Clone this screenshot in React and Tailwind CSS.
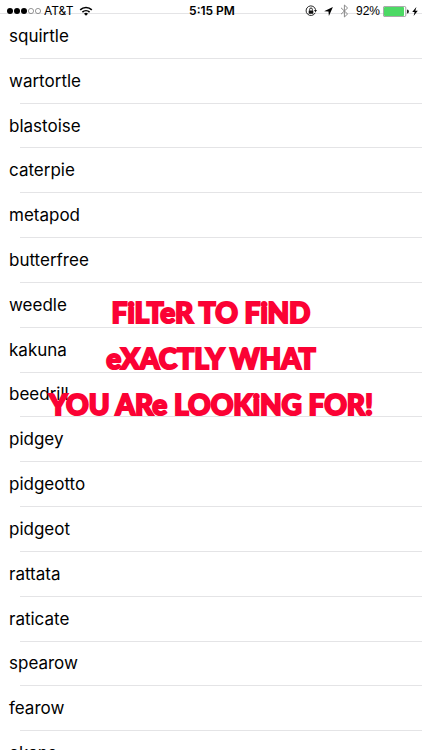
import React from "react";

const names = [
  "squirtle",
  "wartortle",
  "blastoise",
  "caterpie",
  "metapod",
  "butterfree",
  "weedle",
  "kakuna",
  "beedrill",
  "pidgey",
  "pidgeotto",
  "pidgeot",
  "rattata",
  "raticate",
  "spearow",
  "fearow",
  "ekans",
];

function SignalDots() {
  return (
    <svg width="36" height="8" viewBox="0 0 36 8" aria-hidden="true">
      <circle cx="4" cy="4" r="3" fill="#000" />
      <circle cx="11" cy="4" r="3" fill="#000" />
      <circle cx="18" cy="4" r="3" fill="#000" />
      <circle cx="25" cy="4" r="2.6" fill="none" stroke="#555" strokeWidth="0.6" />
      <circle cx="32" cy="4" r="2.6" fill="none" stroke="#555" strokeWidth="0.6" />
    </svg>
  );
}

function Wifi() {
  return (
    <svg width="14" height="10" viewBox="0 0 14 10" fill="none" stroke="#000" strokeWidth="1.6" aria-hidden="true">
      <path d="M1.2 3.9 A8.3 8.3 0 0 1 12.8 3.9" />
      <path d="M3.4 6.2 A5.2 5.2 0 0 1 10.6 6.2" />
      <path d="M7 9.8 L5 7.8 A2.9 2.9 0 0 1 9 7.8 Z" fill="#000" stroke="none" />
    </svg>
  );
}

function RotationLock() {
  return (
    <svg width="12" height="12" viewBox="0 0 12 12" fill="none" aria-hidden="true">
      <path d="M10.2 7.8 A4.8 4.8 0 1 1 10.6 4.8" stroke="#111" strokeWidth="0.9" />
      <path d="M9 5 L12 5 L10.5 7.2 Z" fill="#111" />
      <rect x="3.7" y="5.4" width="4.6" height="3.4" rx="0.4" fill="#111" />
      <path d="M4.6 5.6 V4.4 A1.4 1.4 0 0 1 7.4 4.4 V5.6" stroke="#111" strokeWidth="0.9" />
    </svg>
  );
}

function LocationArrow() {
  return (
    <svg width="9" height="9" viewBox="0 0 9 9" aria-hidden="true">
      <path d="M8.9 0.1 L4.9 8.9 L4.5 4.6 L0.1 4.2 Z" fill="#000" />
    </svg>
  );
}

function Bluetooth() {
  return (
    <svg width="9" height="14" viewBox="0 0 9 14" fill="none" stroke="#8a8a8a" strokeWidth="1" aria-hidden="true">
      <path d="M1 3.8 L7.6 10 L4.4 13 V1 L7.6 4 L1 10.2" />
    </svg>
  );
}

function Battery() {
  return (
    <svg width="26" height="11" viewBox="0 0 26 11" aria-hidden="true">
      <rect x="0.4" y="0.4" width="22.4" height="10.2" rx="1.4" fill="#fff" stroke="#777" strokeWidth="0.7" />
      <rect x="1" y="1" width="20" height="9" rx="0.8" fill="#4cd964" />
      <path d="M24 3.6 A1.9 1.9 0 0 1 24 7.4 Z" fill="#222" />
    </svg>
  );
}

function Bolt() {
  return (
    <svg width="6" height="9" viewBox="0 0 6 9" aria-hidden="true">
      <path d="M4.4 0 L0.2 5 H2.6 L1.6 9 L5.8 3.8 H3.3 Z" fill="#000" />
    </svg>
  );
}

function StatusBar() {
  return (
    <header className="absolute inset-x-0 top-0 z-10 grid h-[22px] grid-cols-[1fr_auto_1fr] items-center pr-1 pl-1.5 text-xs text-black">
      <div className="flex items-center gap-0.5">
        <SignalDots />
        <span>AT&amp;T</span>
        <span className="pl-1">
          <Wifi />
        </span>
      </div>
      <time className="font-semibold">5:15 PM</time>
      <div className="flex items-center justify-end gap-[3px]">
        <RotationLock />
        <span className="px-1">
          <LocationArrow />
        </span>
        <Bluetooth />
        <span className="pl-1 font-['Liberation_Sans',sans-serif]">92%</span>
        <Battery />
        <Bolt />
      </div>
    </header>
  );
}

export default function App() {
  return (
    <main className="relative h-screen overflow-hidden bg-white font-['Inter','Liberation_Sans',sans-serif] text-black">
      <StatusBar />
      <div className="mt-[13px] border-t border-[#e4e4e6]">
        <ul className="grid h-[762px] auto-rows-fr">
          {names.map((name) => (
            <li key={name} className="flex flex-col">
              <span className="flex grow items-center pl-[9px] text-[17px] leading-5">{name}</span>
              <span className="ml-5 h-px bg-[#e4e4e6]" />
            </li>
          ))}
        </ul>
      </div>
      <h1 className="absolute inset-x-0 top-[289px] text-center font-['Lato','Liberation_Sans',sans-serif] text-[28px] leading-[46px] font-black text-[#fb0234] [-webkit-text-stroke:2px_#fb0234]">
        FiLTeR TO FiND
        <br />
        eXACTLY WHAT
        <br />
        YOU ARe LOOKiNG FOR!
      </h1>
    </main>
  );
}
